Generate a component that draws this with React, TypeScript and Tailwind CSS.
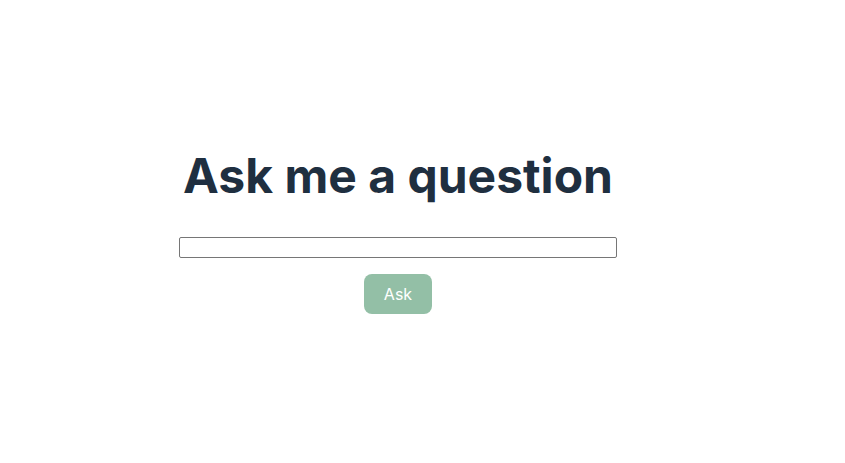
import React, { useState } from "react";

export default function App() {
  const [question, setQuestion] = useState("");

  return (
    <div className="w-[845px] h-[463px] bg-white font-['Inter',sans-serif]">
      <div className="w-[796px] flex flex-col items-center pt-[146px]">
        <h1 className="text-[48px] leading-[60px] font-bold text-[#1f2f40]">
          Ask me a question
        </h1>
        <input
          type="text"
          value={question}
          onChange={(e) => setQuestion(e.target.value)}
          className="mt-[31px] w-[438px] h-[21px] border border-[#767676] rounded-[2px] px-1 text-sm outline-none"
        />
        <button
          type="button"
          className="mt-[16px] w-[68px] h-[40px] rounded-[8px] bg-[#93bfa6] text-white text-[16px]"
        >
          Ask
        </button>
      </div>
    </div>
  );
}
